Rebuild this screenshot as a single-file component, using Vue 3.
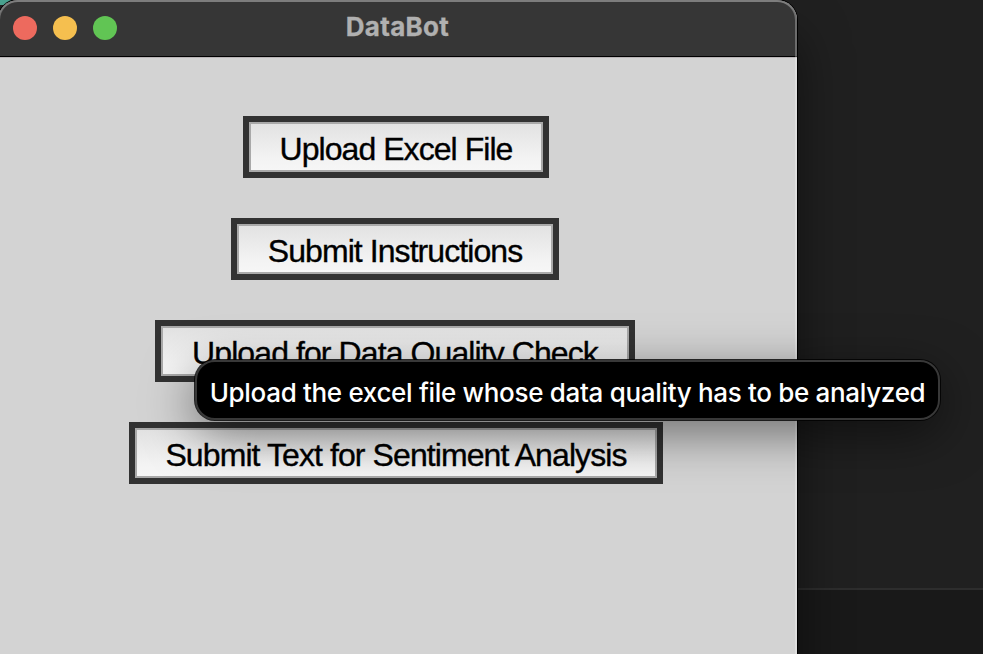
<script setup>
const actions = [
  { label: 'Upload Excel File', kind: 'excel' },
  { label: 'Submit Instructions', kind: 'instructions' },
  { label: 'Upload for Data Quality Check', kind: 'quality' },
  { label: 'Submit Text for Sentiment Analysis', kind: 'sentiment' },
]
</script>

<template>
  <div class="desktop">
    <div class="panel"></div>
    <div class="corner"></div>
    <main class="window">
      <header class="titlebar">
        <div class="lights">
          <span class="light close"></span>
          <span class="light minimize"></span>
          <span class="light zoom"></span>
        </div>
        <h1 class="title">DataBot</h1>
      </header>
      <section class="content">
        <button v-for="a in actions" :key="a.kind" class="action" :class="a.kind">
          <span class="face"><span class="label">{{ a.label }}</span></span>
        </button>
      </section>
    </main>
    <div class="tooltip" role="tooltip">
      <span class="tip">Upload the excel file whose data quality has to be analyzed</span>
    </div>
  </div>
</template>

<style>
body { margin: 0; overflow: hidden; }
</style>

<style scoped>
.desktop {
  position: relative;
  width: 983px;
  height: 654px;
  overflow: hidden;
  background: #202020;
}
.panel {
  position: absolute;
  left: 0;
  right: 0;
  top: 588px;
  bottom: 0;
  box-sizing: border-box;
  border-top: 2px solid #2d2d2d;
  background: #191919;
}
.corner {
  position: absolute;
  left: 0;
  top: 0;
  width: 12px;
  height: 5px;
  background: #4ba592;
}
.window {
  position: relative;
  box-sizing: border-box;
  width: 799px;
  height: 720px;
  margin-left: -2px;
  overflow: hidden;
  border-radius: 20px;
  background: #d3d3d3;
  box-shadow: 0 0 0 1px #000, 0 36px 50px rgba(0, 0, 0, 0.5);
}
.window::after {
  content: '';
  position: absolute;
  inset: 0;
  border-radius: 20px;
  box-shadow: inset 0 0 0 2px rgba(255, 255, 255, 0.27), inset 0 2px 0 rgba(255, 255, 255, 0.12);
  pointer-events: none;
}
.titlebar {
  position: relative;
  box-sizing: border-box;
  height: 57px;
  display: flex;
  align-items: center;
  justify-content: center;
  background: #363636;
  border-bottom: 1px solid #000;
  box-shadow: 0 1px 0 #b9b5b7;
}
.lights {
  position: absolute;
  left: 15px;
  top: 16px;
  display: flex;
  gap: 16px;
}
.light {
  width: 24px;
  height: 24px;
  border-radius: 50%;
}
.close { background: #ed6a5e; }
.minimize { background: #f5bf4f; }
.zoom { background: #61c554; }
.title {
  margin: 0;
  padding-bottom: 2px;
  color: #b0b0b0;
  font: 700 26px/32px Inter, sans-serif;
  letter-spacing: 0.3px;
  -webkit-text-stroke: 0.3px #b0b0b0;
}
.content {
  box-sizing: border-box;
  display: flex;
  flex-direction: column;
  align-items: center;
  gap: 40px;
  width: 796px;
  padding-top: 59px;
}
.action {
  box-sizing: border-box;
  height: 62px;
  padding: 0;
  border: 6px solid #323232;
  border-radius: 0;
  background: none;
  color: #000;
  font: 32px/46px "Liberation Sans", Arial, sans-serif;
}
.face {
  box-sizing: border-box;
  display: flex;
  justify-content: center;
  height: 50px;
  border: 2px solid #a9a9a9;
  background: linear-gradient(#e2e2e2, #f3f3f3 75%, #f6f6f6);
}
.label {
  padding-top: 2px;
  white-space: nowrap;
  -webkit-text-stroke: 0.35px #000;
}
.excel { width: 306px; letter-spacing: -0.95px; }
.instructions { width: 328px; margin-right: 2px; letter-spacing: -0.93px; }
.quality { width: 480px; margin-right: 2px; letter-spacing: -0.91px; }
.sentiment { width: 534px; letter-spacing: -0.91px; }
.tooltip {
  position: absolute;
  left: 195px;
  top: 360px;
  box-sizing: border-box;
  width: 745px;
  height: 60px;
  display: flex;
  align-items: center;
  justify-content: center;
  border: 2px solid #383838;
  border-radius: 20px;
  background: #000;
  box-shadow: 0 0 0 1px rgba(0, 0, 0, 0.8), 0 13px 50px rgba(0, 0, 0, 0.5);
}
.tip {
  padding-top: 6px;
  white-space: nowrap;
  color: #fff;
  font: 500 26px/32px Inter, sans-serif;
  letter-spacing: -0.32px;
}
</style>
